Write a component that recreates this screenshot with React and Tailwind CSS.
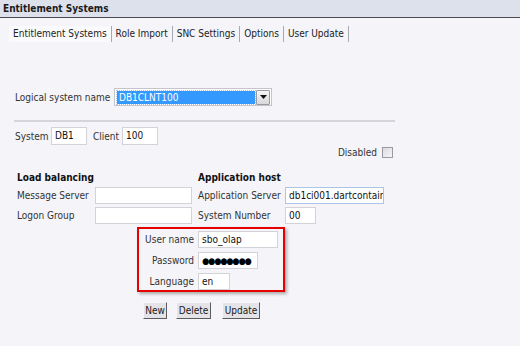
import React from "react";

const tabs = ["Entitlement Systems", "Role Import", "SNC Settings", "Options", "User Update"];

function Field({ w, value, focus, className = "" }) {
  return (
    <div
      className={`h-[17px] bg-white border ${
        focus ? "border-[#a9c6e6]" : "border-[#d2d2d8]"
      } px-[3px] leading-[15px] text-[#111] overflow-hidden whitespace-nowrap ${w} ${className}`}
    >
      {value}
    </div>
  );
}

function Btn({ children, w }) {
  return (
    <div
      className={`h-[17px] ${w} bg-[#e4e4e8] border border-t-[#f6f6f8] border-l-[#f6f6f8] border-r-[#5c5c60] border-b-[#5c5c60] text-center leading-[15px] text-[#1a1a1a]`}
    >
      {children}
    </div>
  );
}

export default function App() {
  return (
    <div className="w-[520px] h-[346px] overflow-hidden bg-[#f4f4f9] text-[10px] text-[#333] font-['DejaVu_Sans_Condensed','DejaVu_Sans',sans-serif]">
      {/* title bar */}
      <div className="h-[18px] bg-[#dde1ec] border-b border-[#4a4a50] pl-[3px] leading-[17px] font-bold text-[#1a1a1a]">
        Entitlement Systems
      </div>

      {/* tabs */}
      <div className="mt-[8px] pl-[9px] flex h-[16px]">
        {tabs.map((t, i) => (
          <div
            key={t}
            className={`px-[4px] leading-[16px] border-r border-[#a8a8b2] text-[#222] ${
              i === 0 ? "bg-[#fafafc]" : ""
            }`}
          >
            {t}
          </div>
        ))}
      </div>

      {/* logical system */}
      <div className="mt-[46px] pl-[15px] flex items-center h-[18px]">
        <div className="w-[99px]">Logical system name</div>
        <div className="w-[158px] h-[18px] bg-white border border-[#c4c4ca] flex items-center pl-[2px] pr-[1px] gap-[1px]">
          <div className="flex-1 h-[13px] bg-[#3399ff] text-white leading-[13px] pl-[2px] outline outline-1 outline-dotted outline-[#9cc8f6]">
            DB1CLNT100
          </div>
          <div className="w-[14px] h-[15px] rounded-[1px] border border-[#9a9aa0] bg-gradient-to-b from-[#f6f6f6] to-[#d8d8dc] flex items-center justify-center">
            <svg width="7" height="4" viewBox="0 0 7 4">
              <path d="M0 0h7L3.5 4z" fill="#111" />
            </svg>
          </div>
        </div>
      </div>

      <div className="mt-[14px] ml-[14px] w-[381px] h-[2px] bg-[#d4d4da]" />

      {/* system / client */}
      <div className="mt-[5px] pl-[15px] flex items-center h-[18px]">
        <div className="w-[36px]">System</div>
        <Field w="w-[36px]" value="DB1" className="h-[18px] leading-[16px]" />
        <div className="ml-[6px] w-[29px]">Client</div>
        <Field w="w-[36px]" value="100" className="h-[18px] leading-[16px]" />
      </div>

      <div className="mt-[1px] w-[393px] flex justify-end items-center gap-[5px] h-[12px]">
        <span>Disabled</span>
        <div className="w-[11px] h-[11px] border border-[#9a9aa2] bg-gradient-to-br from-[#dcdce0] to-[#f6f6f8]" />
      </div>

      {/* load balancing / application host */}
      <div className="mt-[14px] pl-[17px] grid grid-cols-[181px_200px]">
        <div>
          <div className="h-[12px] leading-[12px] font-bold text-[#111]">Load balancing</div>
          <div className="mt-[3px] flex items-center h-[17px]">
            <div className="w-[78px]">Message Server</div>
            <Field w="w-[97px]" value="" />
          </div>
          <div className="mt-[3px] flex items-center h-[17px]">
            <div className="w-[78px]">Logon Group</div>
            <Field w="w-[97px]" value="" />
          </div>
        </div>
        <div>
          <div className="h-[12px] leading-[12px] font-bold text-[#111]">Application host</div>
          <div className="mt-[3px] flex items-center h-[17px]">
            <div className="w-[87px]">Application Server</div>
            <Field w="w-[99px]" value="db1ci001.dartcontain" focus className="px-[2px]" />
          </div>
          <div className="mt-[3px] flex items-center h-[17px]">
            <div className="w-[87px]">System Number</div>
            <Field w="w-[31px]" value="00" />
          </div>
        </div>
      </div>

      {/* credentials */}
      <div className="mt-[3px] ml-[137px] w-[148px] border-2 border-[#e60000] pt-[2px] pb-[1px] flex flex-col gap-[5px] shadow-[2px_2px_3px_rgba(0,0,0,0.3)]">
        <div className="flex items-center h-[16px]">
          <div className="w-[55px] mr-[4px] text-right">User name</div>
          <Field w="w-[80px]" value="sbo_olap" className="h-[16px] leading-[14px]" />
        </div>
        <div className="flex items-center h-[16px]">
          <div className="w-[55px] mr-[4px] text-right">Password</div>
          <Field
            w="w-[60px]"
            value={<span className="text-[9px] tracking-[-1px]">●●●●●●●●</span>}
            className="h-[16px] leading-[14px] text-black"
          />
        </div>
        <div className="flex items-center h-[16px]">
          <div className="w-[55px] mr-[4px] text-right">Language</div>
          <Field w="w-[32px]" value="en" className="h-[16px] leading-[14px]" />
        </div>
      </div>

      {/* actions */}
      <div className="mt-[10px] pl-[143px] flex">
        <Btn w="w-[24px]">New</Btn>
        <div className="w-[9px]" />
        <Btn w="w-[35px]">Delete</Btn>
        <div className="w-[11px]" />
        <Btn w="w-[38px]">Update</Btn>
      </div>
    </div>
  );
}
